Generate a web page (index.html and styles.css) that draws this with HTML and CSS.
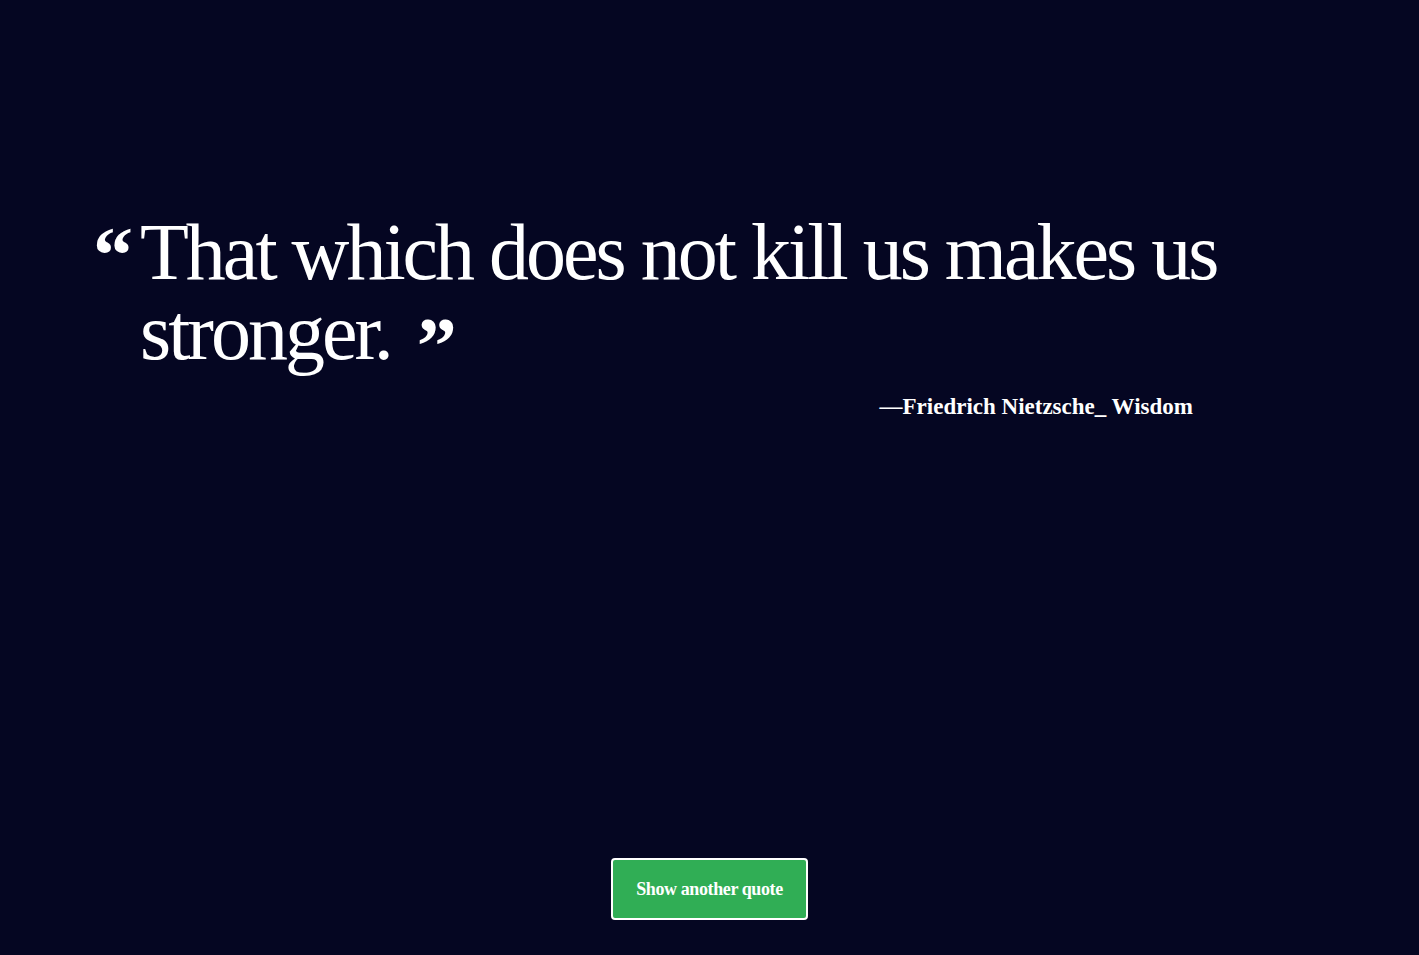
FILE: index.html
```html
<!DOCTYPE html>
<html lang="en">
<head>
<meta charset="utf-8">
<title>Quote</title>
<link rel="stylesheet" href="styles.css">
</head>
<body>
<main class="page">
  <section class="quote-box">
    <div class="quote">
      <span class="mark mark-open">&ldquo;</span>
      <p class="quote-text">That which does not kill us makes us stronger.<span class="mark mark-close">&rdquo;</span></p>
    </div>
    <p class="author">&mdash;Friedrich Nietzsche_ Wisdom</p>
  </section>
  <div class="actions">
    <button class="btn" type="button">Show another quote</button>
  </div>
</main>
</body>
</html>
```
FILE: styles.css
```css
* { box-sizing: border-box; }
html, body { margin: 0; height: 100%; }
body {
  background: #050622;
  color: #fff;
  font-family: "Liberation Serif", "DejaVu Serif", serif;
}
.page {
  height: 955px;
  display: flex;
  flex-direction: column;
  justify-content: space-between;
  padding: 212px 0 35px;
}
.quote-box {
  width: 1150px;
  margin-left: 95px;
}
.quote {
  display: flex;
  align-items: flex-start;
}
.mark {
  font-family: "Liberation Serif", serif;
  font-weight: bold;
  font-size: 80px;
  letter-spacing: 0;
}
.mark-open {
  width: 47px;
  flex: none;
  line-height: 1;
  margin-top: 3px;
  margin-left: -2px;
}
.mark-close {
  margin-left: 26px;
  line-height: 0;
  vertical-align: -14px;
}
.quote-text {
  margin: 0;
  font-size: 80px;
  line-height: 80px;
  letter-spacing: -3px;
}
.author {
  margin: 22px 52px 0 0;
  text-align: right;
  font-size: 23px;
  font-weight: bold;
}
.actions {
  display: flex;
  justify-content: center;
}
.btn {
  width: 197px;
  height: 62px;
  background: #30ae55;
  color: #fff;
  border: 2px solid #fff;
  border-radius: 4px;
  font-family: "Liberation Serif", serif;
  font-size: 18px;
  font-weight: bold;
  letter-spacing: -0.4px;
  cursor: pointer;
}
```
